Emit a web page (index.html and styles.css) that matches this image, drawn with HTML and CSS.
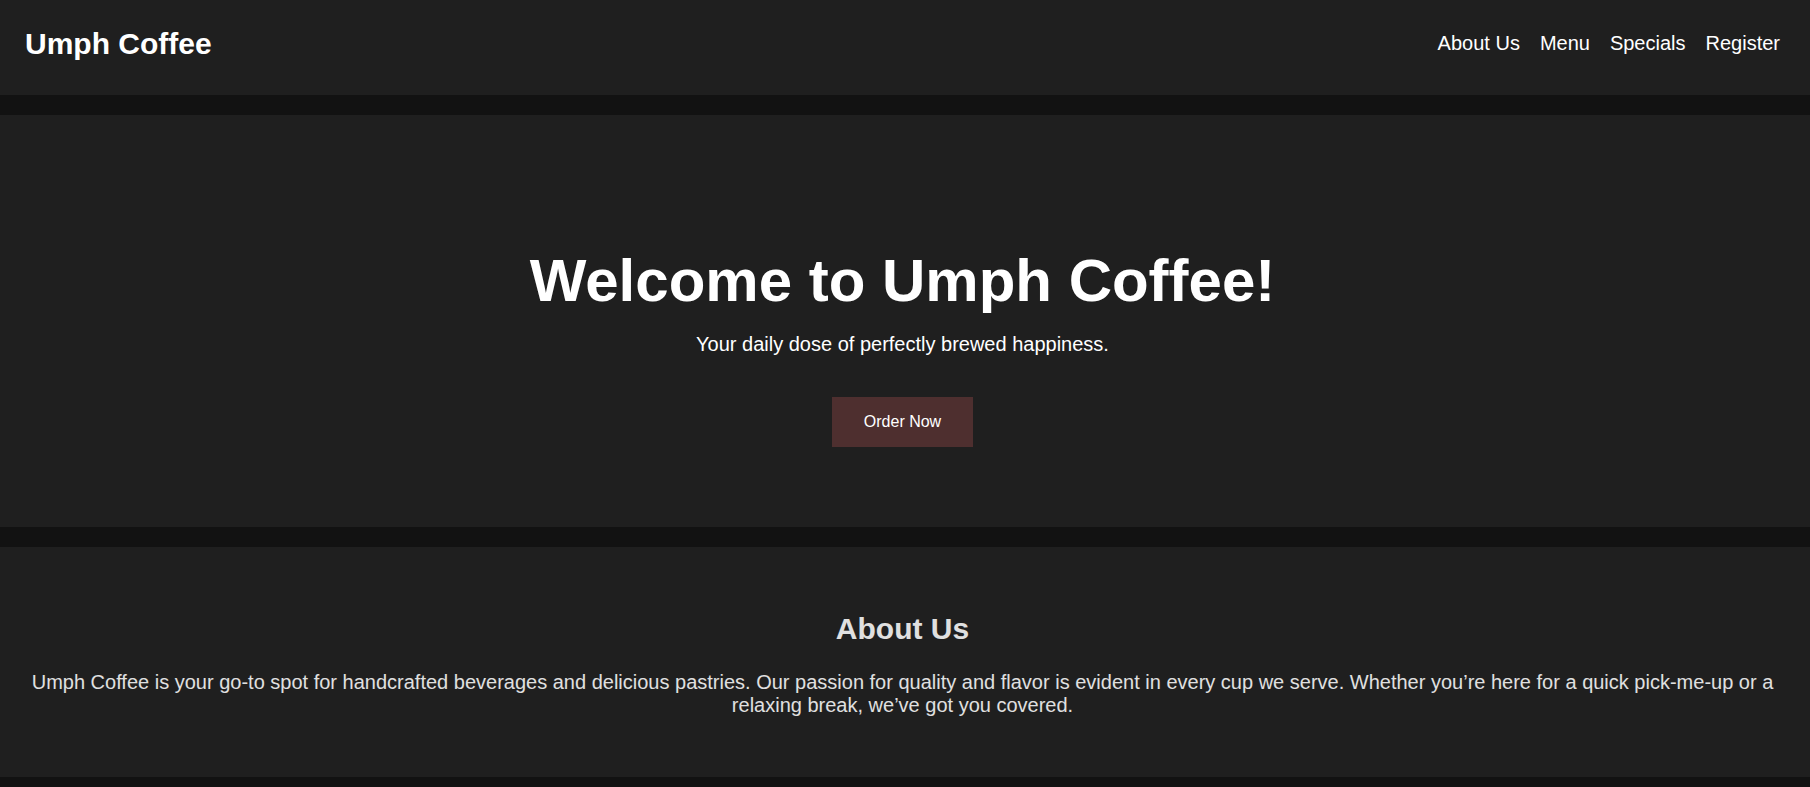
FILE: index.html
```html
<!DOCTYPE html>
<html lang="en">
<head>
<meta charset="utf-8">
<title>Umph Coffee</title>
<link rel="stylesheet" href="styles.css">
</head>
<body>
  <header class="site-header">
    <div class="logo">Umph Coffee</div>
    <nav class="nav">
      <a href="#about">About Us</a>
      <a href="#menu">Menu</a>
      <a href="#specials">Specials</a>
      <a href="#register">Register</a>
    </nav>
  </header>
  <section class="hero">
    <h1 class="hero-title">Welcome to Umph Coffee!</h1>
    <p class="hero-sub">Your daily dose of perfectly brewed happiness.</p>
    <a class="btn" href="#order">Order Now</a>
  </section>
  <section class="about" id="about">
    <h2 class="about-title">About Us</h2>
    <p class="about-text">Umph Coffee is your go-to spot for handcrafted beverages and delicious pastries. Our passion for quality and flavor is evident in every cup we serve. Whether you’re here for a quick pick-me-up or a relaxing break, we’ve got you covered.</p>
  </section>
</body>
</html>
```
FILE: styles.css
```css
html, body {
  margin: 0;
  padding: 0;
}
body {
  background: #121212;
  font-family: "Liberation Sans", Arial, sans-serif;
  color: #ffffff;
}
.site-header {
  height: 95px;
  box-sizing: border-box;
  padding: 0 30px 8px 25px;
  background: #1f1f1f;
  display: flex;
  align-items: center;
  justify-content: space-between;
  margin-bottom: 20px;
}
.logo {
  font-size: 30px;
  font-weight: bold;
  color: #ffffff;
}
.nav {
  display: flex;
  gap: 20px;
}
.nav a {
  color: #ffffff;
  text-decoration: none;
  font-size: 20px;
}
.hero {
  background: #1f1f1f;
  text-align: center;
  padding: 131px 25px 80px 20px;
  margin-bottom: 20px;
  height: 412px;
  box-sizing: border-box;
}
.hero-title {
  font-size: 60px;
  font-weight: bold;
  margin: 0 0 18px;
  color: #ffffff;
}
.hero-sub {
  font-size: 20px;
  margin: 0 0 41px;
  color: #ffffff;
}
.btn {
  display: inline-block;
  background: #4e2f2f;
  color: #ffffff;
  text-decoration: none;
  font-size: 16px;
  padding: 16px 32px;
  line-height: 18px;
}
.about {
  background: #1f1f1f;
  text-align: center;
  padding: 40px 25px 40px 20px;
  margin-bottom: 20px;
  color: #e0e0e0;
}
.about-title {
  font-size: 30px;
  font-weight: bold;
  margin: 25px 0 25px;
  color: #e0e0e0;
}
.about-text {
  font-size: 20px;
  margin: 0 0 20px;
  color: #e0e0e0;
}
```
